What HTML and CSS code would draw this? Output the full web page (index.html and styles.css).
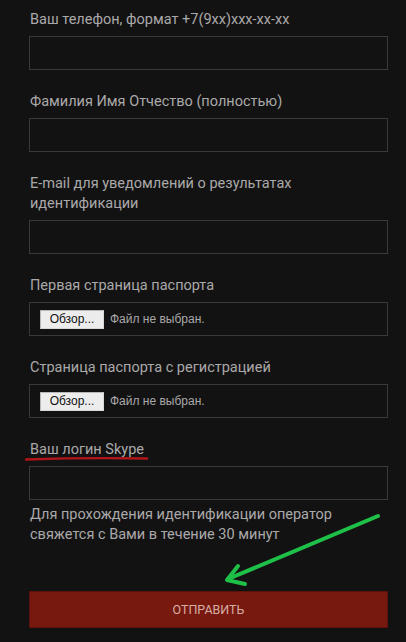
FILE: index.html
```html
<!DOCTYPE html>
<html lang="ru">
<head>
<meta charset="utf-8">
<link rel="stylesheet" href="styles.css">
</head>
<body>
<form class="form">
  <div class="field">
    <label class="label">Ваш телефон, формат +7(9xx)xxx-xx-xx</label>
    <input class="input" type="text">
  </div>
  <div class="field">
    <label class="label">Фамилия Имя Отчество (полностью)</label>
    <input class="input" type="text">
  </div>
  <div class="field">
    <label class="label">E-mail для уведомлений о результатах<br>идентификации</label>
    <input class="input" type="text">
  </div>
  <div class="field">
    <label class="label">Первая страница паспорта</label>
    <div class="file"><span class="file-btn">Обзор...</span><span class="file-text">Файл не выбран.</span></div>
  </div>
  <div class="field">
    <label class="label">Страница паспорта с регистрацией</label>
    <div class="file"><span class="file-btn">Обзор...</span><span class="file-text">Файл не выбран.</span></div>
  </div>
  <div class="field field-last">
    <label class="label label-marked">Ваш логин Skype
      <svg class="underline" width="124" height="6" viewBox="0 0 124 6"><path d="M1 3.5 Q60 1.5 122 2.5" stroke="#b3161a" stroke-width="2.4" fill="none" stroke-linecap="round"/></svg>
    </label>
    <input class="input" type="text">
  </div>
  <p class="note">Для прохождения идентификации оператор<br>свяжется с Вами в течение 30 минут</p>
  <button class="submit" type="button">ОТПРАВИТЬ</button>
  <svg class="arrow" width="170" height="80" viewBox="0 0 170 80">
    <g stroke="#1ec048" stroke-width="4" fill="none" stroke-linecap="round" stroke-linejoin="round">
      <path d="M160 6 L10 69"/>
      <path d="M20 56 L9 70 L27 74"/>
    </g>
  </svg>
</form>
</body>
</html>
```
FILE: styles.css
```css
html, body {
  margin: 0;
  padding: 0;
  background: #131213;
}
body {
  font-family: Roboto, "Noto Sans", sans-serif;
  color: #aaa9a9;
}
.form {
  position: relative;
  padding: 10px 18px 20px 29px;
  width: 359px;
}
.field {
  display: flex;
  flex-direction: column;
  margin-bottom: 22px;
}
.field-last {
  margin-bottom: 5px;
}
.label {
  font-size: 14.5px;
  line-height: 20px;
  margin-bottom: 6px;
  padding-left: 1px;
}
.label-marked {
  position: relative;
}
.underline {
  position: absolute;
  left: -4px;
  top: 16px;
}
.input {
  box-sizing: border-box;
  width: 359px;
  height: 34px;
  margin: 0;
  background: #131213;
  border: 1px solid #3b3a3a;
  outline: none;
}
.file {
  box-sizing: border-box;
  width: 359px;
  height: 34px;
  border: 1px solid #3b3a3a;
  display: flex;
  align-items: center;
  padding-left: 10px;
  font-size: 12px;
}
.file-btn {
  box-sizing: border-box;
  height: 19px;
  width: 64px;
  background: #ececec;
  border: 1px solid #b8b8b8;
  border-right-color: #d8d8d8;
  border-bottom-color: #d8d8d8;
  color: #111;
  display: flex;
  align-items: center;
  justify-content: center;
  font-family: "Liberation Sans", sans-serif;
  font-size: 12px;
}
.file-text {
  margin-left: 6px;
  color: #a9a8a8;
  font-family: "Liberation Sans", sans-serif;
  font-size: 12px;
}
.note {
  margin: 0;
  padding-left: 1px;
  font-size: 14.5px;
  line-height: 20px;
}
.submit {
  display: block;
  margin-top: 46px;
  width: 359px;
  height: 37px;
  background: #781910;
  border: 1px solid #5c120b;
  color: #d7aea6;
  font-family: Roboto, sans-serif;
  font-size: 12.5px;
  padding: 0;
}
.arrow {
  position: absolute;
  left: 218px;
  top: 510px;
}
```
